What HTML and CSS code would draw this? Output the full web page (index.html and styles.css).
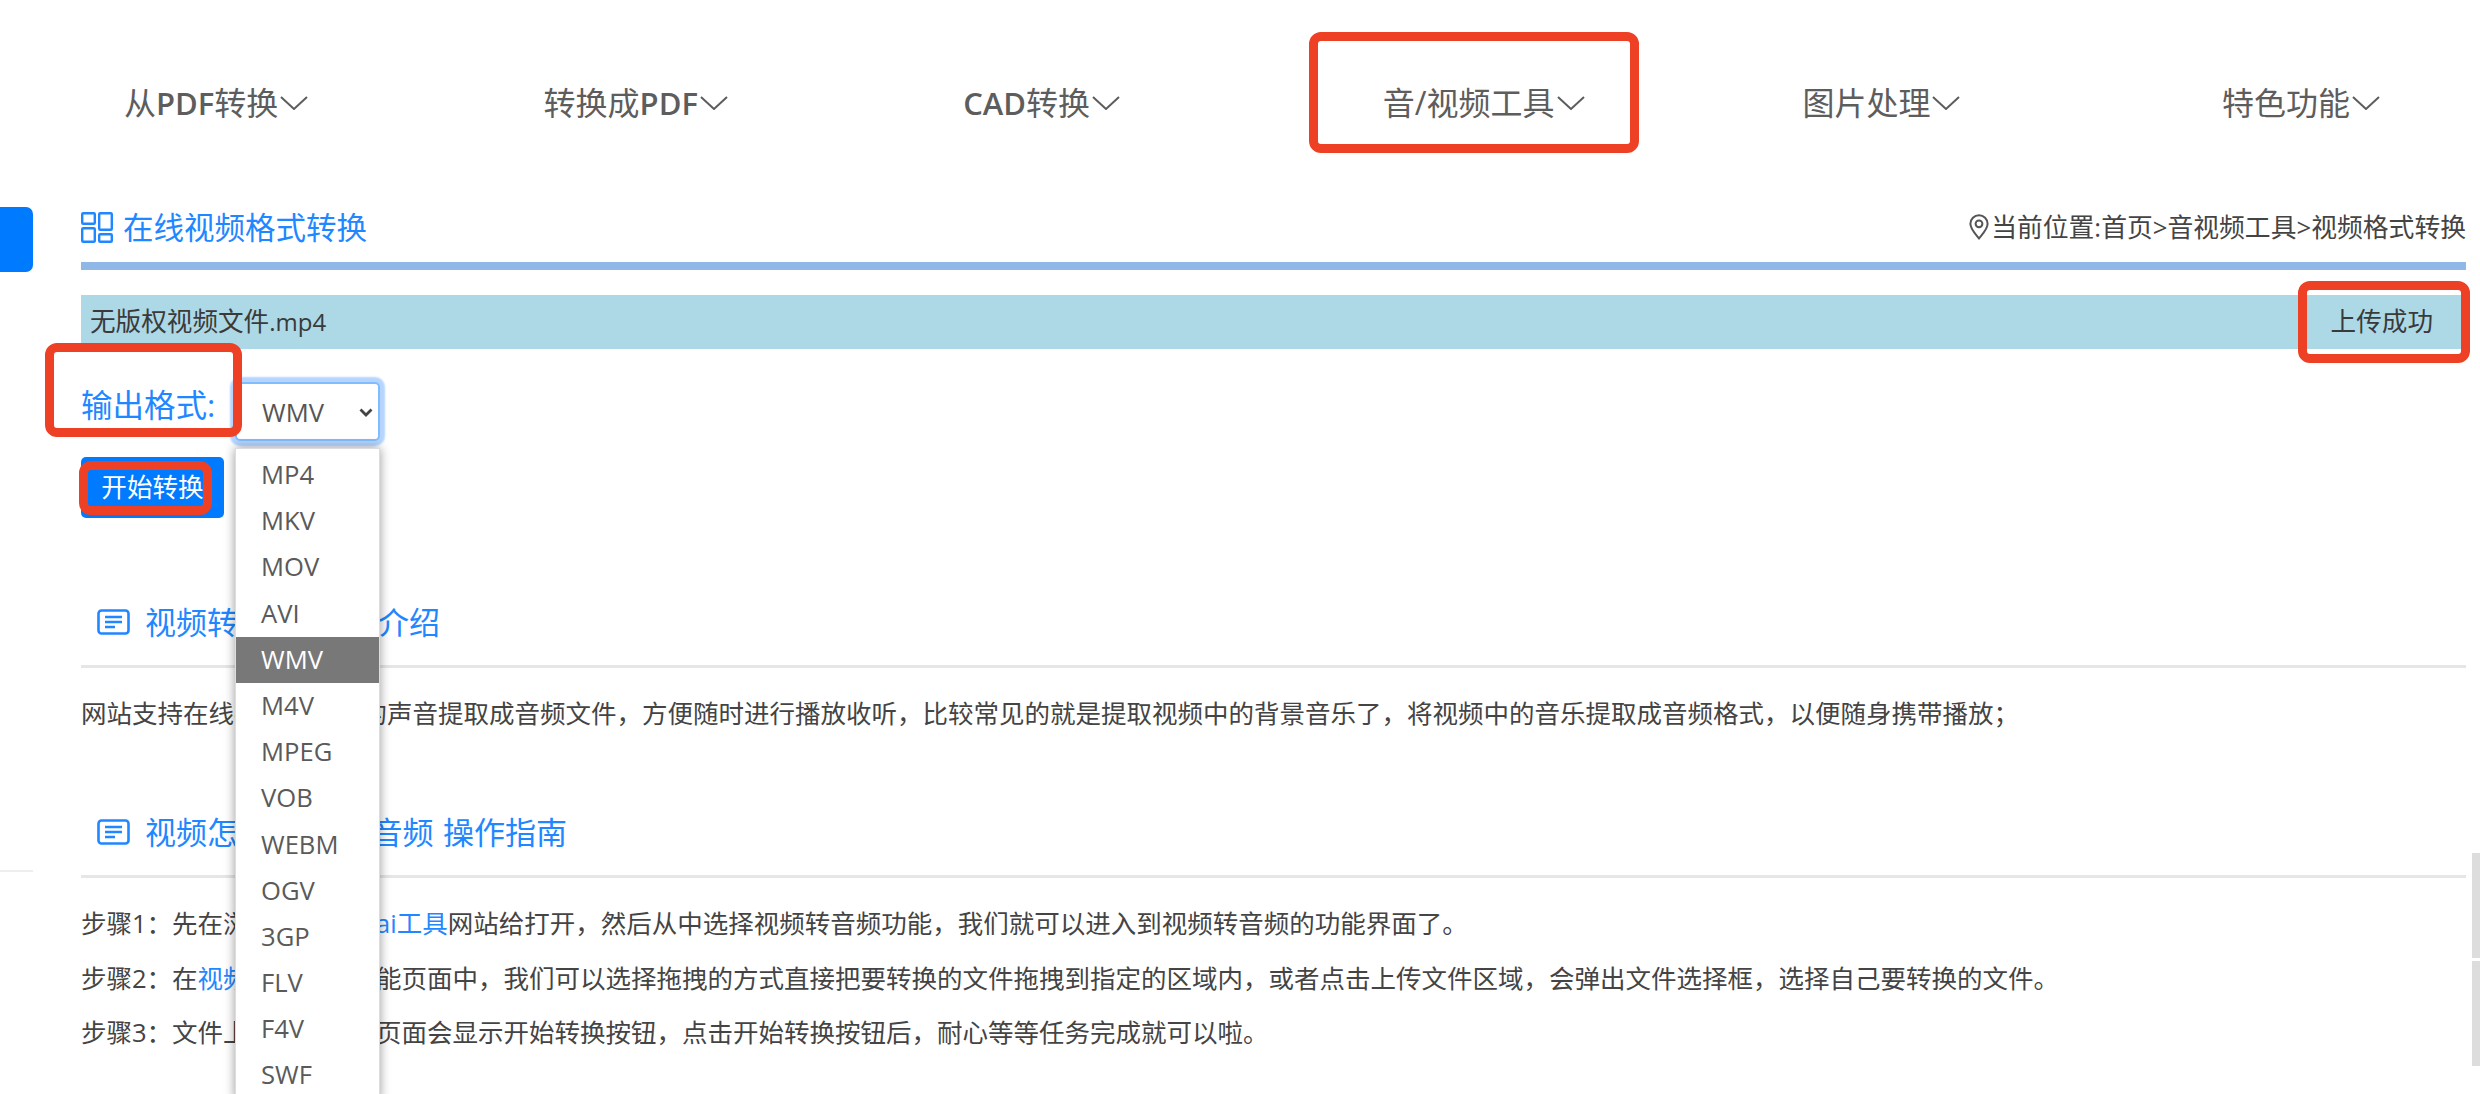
FILE: index.html
```html
<!DOCTYPE html>
<html lang="zh-CN">
<head>
<meta charset="utf-8">
<title>在线视频格式转换</title>
<link rel="stylesheet" href="styles.css">
</head>
<body>
<div class="page">
  <nav class="nav">
    <a class="nav-item">从<b>PDF</b>转换<svg class="chev" viewBox="0 0 28 14"><path d="M1 1l13 12L27 1"/></svg></a>
    <a class="nav-item">转换成<b>PDF</b><svg class="chev" viewBox="0 0 28 14"><path d="M1 1l13 12L27 1"/></svg></a>
    <a class="nav-item"><b>CAD</b>转换<svg class="chev" viewBox="0 0 28 14"><path d="M1 1l13 12L27 1"/></svg></a>
    <a class="nav-item">音/视频工具<svg class="chev" viewBox="0 0 28 14"><path d="M1 1l13 12L27 1"/></svg></a>
    <a class="nav-item">图片处理<svg class="chev" viewBox="0 0 28 14"><path d="M1 1l13 12L27 1"/></svg></a>
    <a class="nav-item">特色功能<svg class="chev" viewBox="0 0 28 14"><path d="M1 1l13 12L27 1"/></svg></a>
  </nav>

  <main class="main">
    <header class="title-row">
      <h1 class="title">
        <svg class="title-icon" viewBox="0 0 32 31"><rect x="1.2" y="1.2" width="12.6" height="10.6" rx="1"/><rect x="1.2" y="16.2" width="12.6" height="13.6" rx="1"/><rect x="18.2" y="1.2" width="12.6" height="16.6" rx="1"/><rect x="18.2" y="22.2" width="12.6" height="7.6" rx="1"/></svg>
        <span>在线视频格式转换</span>
      </h1>
      <div class="crumb">
        <svg class="pin" viewBox="0 0 20 26"><path d="M10 1.2a8.6 8.6 0 0 0-8.6 8.6c0 5.6 5.6 10.6 8.6 14.6 3-4 8.6-9 8.6-14.6A8.6 8.6 0 0 0 10 1.2z"/><circle cx="10" cy="9.8" r="3.4"/></svg>
        <span>当前位置:首页&gt;音视频工具&gt;视频格式转换</span>
      </div>
    </header>
    <div class="bar"></div>

    <div class="file-row">
      <span>无版权视频文件<span class="ext">.mp4</span></span>
      <span class="file-status">上传成功</span>
    </div>

    <div class="format-row">
      <label class="format-label">输出格式:</label>
      <div class="select-wrap">
        <div class="select">
          <span>WMV</span>
          <svg class="caret" viewBox="0 0 14 9"><path d="M1.5 1.5L7 7l5.500-5.500"/></svg>
        </div>
        <ul class="menu">
          <li>MP4</li><li>MKV</li><li>MOV</li><li>AVI</li>
          <li class="is-active">WMV</li>
          <li>M4V</li><li>MPEG</li><li>VOB</li><li>WEBM</li><li>OGV</li><li>3GP</li><li>FLV</li><li>F4V</li><li>SWF</li>
        </ul>
      </div>
    </div>

    <button class="start">开始转换</button>

    <section class="section section-first">
      <h2 class="section-head">
        <svg class="doc-icon" viewBox="0 0 33 26"><rect x="1.500" y="1.500" width="30" height="23" rx="3"/><path d="M8 8h17M8 13h17M8 18h10"/></svg>
        <span>视频转音频 功能介绍</span>
      </h2>
      <p class="line">网站支持在线把视频文件的声音提取成音频文件，方便随时进行播放收听，比较常见的就是提取视频中的背景音乐了，将视频中的音乐提取成音频格式，以便随身携带播放；</p>
    </section>

    <section class="section section-second">
      <h2 class="section-head">
        <svg class="doc-icon" viewBox="0 0 33 26"><rect x="1.500" y="1.500" width="30" height="23" rx="3"/><path d="M8 8h17M8 13h17M8 18h10"/></svg>
        <span>视频怎么转换成 音频 操作指南</span>
      </h2>
      <p class="line">步骤1：先在浏览器中将<a class="link">该ai工具</a>网站给打开，然后从中选择视频转音频功能，我们就可以进入到视频转音频的功能界面了。</p>
      <p class="line">步骤2：在<a class="link">视频转音频</a>的功能页面中，我们可以选择拖拽的方式直接把要转换的文件拖拽到指定的区域内，或者点击上传文件区域，会弹出文件选择框，选择自己要转换的文件。</p>
      <p class="line">步骤3：文件上传成功后，页面会显示开始转换按钮，点击开始转换按钮后，耐心等等任务完成就可以啦。</p>
    </section>
  </main>

  <div class="side-tab"></div>
  <div class="side-rule"></div>
  <div class="scroll-thumb thumb-a"></div>
  <div class="scroll-thumb thumb-b"></div>

  <div class="mark mark-nav"></div>
  <div class="mark mark-status"></div>
  <div class="mark mark-label"></div>
  <div class="mark mark-start"></div>
</div>
</body>
</html>
```

FILE: styles.css
```css
* { box-sizing: border-box; }
html, body { margin: 0; padding: 0; }
body {
  background: #fff;
  font-family: "Open Sans", "Noto Sans CJK SC", sans-serif;
  font-size: 25.6px;
  color: #444;
}
.page { position: relative; height: 1094px; overflow: hidden; }

.nav { display: flex; height: 206px; padding-left: 124px; align-items: center; }
.nav-item { flex: 0 0 419.6px; display: flex; align-items: center; font-size: 32px; line-height: 40px; color: #5d5d5d; }
.nav-item b { font-weight: 600; font-size: 31px; }
.chev { width: 28px; height: 14px; margin-left: 2px; fill: none; stroke: #5d5d5d; stroke-width: 2; }

.main { margin-left: 81px; width: 2385px; }
.title-row { display: flex; justify-content: space-between; align-items: center; height: 56px; padding-bottom: 14px; }
.title { display: flex; align-items: center; margin: 0; font-size: 30.500px; line-height: 42px; font-weight: 400; color: #1f87ff; }
.title-icon { width: 32px; height: 31px; margin-right: 10px; fill: none; stroke: #1f87ff; stroke-width: 2.400; }
.crumb { display: flex; align-items: center; font-size: 25.800px; line-height: 42px; color: #444; }
.pin { width: 20px; height: 26px; margin-right: 2px; fill: none; stroke: #555; stroke-width: 2; }
.bar { height: 8px; background: #8fb8e6; }

.file-row { display: flex; justify-content: space-between; align-items: center; height: 54px; margin-top: 25px; padding: 0 33px 0 9px; background: #add8e6; line-height: 54px; color: #3a3a3a; }
.ext { font-size: 24px; }

.format-row { display: flex; align-items: flex-start; height: 59px; margin-top: 33px; }
.format-label { width: 154px; font-size: 31.500px; line-height: 46px; color: #1f87ff; }
.select-wrap { position: relative; width: 145px; height: 59px; }
.select { display: flex; align-items: center; justify-content: space-between; height: 59px; padding: 2px 5px 0 25px; border: 2px solid #80bdff; border-radius: 5px; box-shadow: 0 0 2px 5px #b5d5ff; color: #555; background: #fff; }
.caret { width: 14px; height: 9px; fill: none; stroke: #444; stroke-width: 2.800; }
.menu { position: absolute; top: 66px; left: 0; width: 145px; margin: 0; padding: 3px 0 0; list-style: none; background: #fff; border: 1px solid #ddd; box-shadow: 0 0 10px rgba(0,0,0,.4); z-index: 2; }
.menu li { height: 46.200px; padding-left: 25px; line-height: 46px; color: #5a5a5a; }
.menu .is-active { background: #787878; color: #fff; }

.start { display: block; width: 143px; height: 61px; margin-top: 16px; padding: 0; border: 0; border-radius: 5px; background: #007bff; color: #fff; font: inherit; line-height: 61px; }

.section-first { margin-top: 80px; }
.section-second { margin-top: 67.500px; }
.section-head { display: flex; align-items: center; height: 70px; margin: 0; padding: 0 0 19px 16px; border-bottom: 3px solid #e6e6e6; font-size: 31px; line-height: 48px; font-weight: 400; color: #1f87ff; }
.section-first .section-head { word-spacing: 8px; }
.section-second .section-head { word-spacing: 1.500px; }
.doc-icon { width: 33px; height: 26px; margin-right: 15px; fill: none; stroke: #1f87ff; stroke-width: 2.600; }
.line { margin: 0; height: 54.500px; font-size: 25.500px; line-height: 54.500px; color: #444; white-space: nowrap; }
.section .section-head + .line { margin-top: 18px; }
.link { color: #1f87ff; }

.side-tab { position: absolute; left: 0; top: 207px; width: 33px; height: 65px; background: #007bff; border-radius: 0 7px 7px 0; }
.side-rule { position: absolute; left: 0; top: 870px; width: 33px; height: 2px; background: #eee; }
.scroll-thumb { position: absolute; left: 2472px; width: 8px; height: 105px; background: #ddd; }
.thumb-a { top: 853px; }
.thumb-b { top: 961px; }

.mark { position: absolute; border: 9px solid #ee4025; border-radius: 12px; z-index: 3; pointer-events: none; }
.mark-nav { left: 1309px; top: 32px; width: 330px; height: 121px; }
.mark-status { left: 2298px; top: 281px; width: 172px; height: 82px; }
.mark-label { left: 45px; top: 343px; width: 197px; height: 94px; }
.mark-start { left: 79px; top: 461px; width: 133px; height: 54px; }
```
